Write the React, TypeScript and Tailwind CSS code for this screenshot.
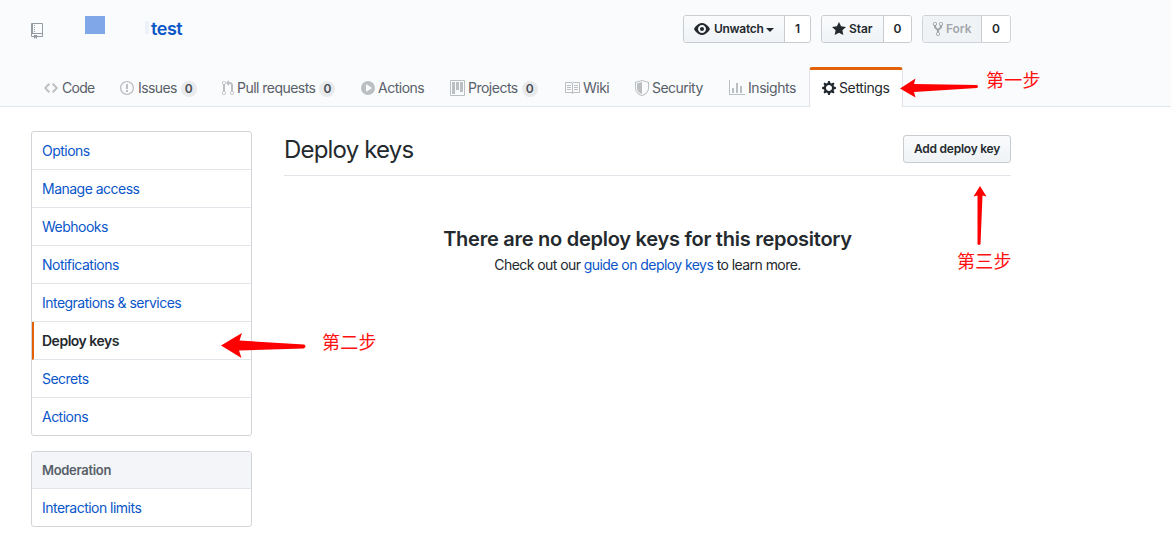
import type { ReactNode } from "react";

const paths = {
  repo: "M4 9H3V8h1v1zm0-3H3v1h1V6zm0-2H3v1h1V4zm0-2H3v1h1V2zm8-1v12c0 .55-.45 1-1 1H6v2l-1.5-1.5L3 16v-2H1c-.55 0-1-.45-1-1V1c0-.55.45-1 1-1h10c.55 0 1 .45 1 1zm-1 10H1v2h2v-1h3v1h5v-2zm0-10H2v9h9V1z",
  code: "M9.5 3L8 4.5 11.5 8 8 11.5 9.5 13 14 8 9.5 3zm-5 0L0 8l4.5 5L6 11.5 2.5 8 6 4.5 4.5 3z",
  issue: "M7 2.3c3.14 0 5.7 2.56 5.7 5.7s-2.56 5.7-5.7 5.7A5.71 5.71 0 011.3 8c0-3.14 2.56-5.7 5.7-5.7zM7 1C3.14 1 0 4.14 0 8s3.14 7 7 7 7-3.14 7-7-3.14-7-7-7zm1 3H6v5h2V4zm0 6H6v2h2v-2z",
  pull: "M11 11.28V5c-.03-.78-.34-1.47-.94-2.06C9.46 2.35 8.78 2.03 8 2H7V0L4 3l3 3V4h1c.27.02.48.11.69.31.21.2.3.42.31.69v6.28A1.993 1.993 0 0010 15a1.993 1.993 0 001-3.72zm-1 2.92c-.66 0-1.2-.55-1.2-1.2 0-.65.55-1.2 1.2-1.2.65 0 1.2.55 1.2 1.2 0 .65-.55 1.2-1.2 1.2zM4 3c0-1.11-.89-2-2-2a1.993 1.993 0 00-1 3.72v6.56A1.993 1.993 0 002 15a1.993 1.993 0 001-3.72V4.72c.59-.34 1-.98 1-1.72zm-.8 10c0 .66-.55 1.2-1.2 1.2-.65 0-1.2-.55-1.2-1.2 0-.65.55-1.2 1.2-1.2.65 0 1.2.55 1.2 1.2zM2 4.2C1.34 4.2.8 3.65.8 3c0-.65.55-1.2 1.2-1.2.65 0 1.2.55 1.2 1.2 0 .65-.55 1.2-1.2 1.2z",
  play: "M14 8A7 7 0 110 8a7 7 0 0114 0zm-8.223 3.482l4.599-3.066a.5.5 0 000-.832L5.777 4.518A.5.5 0 005 4.934v6.132a.5.5 0 00.777.416z",
  project: "M10 12h3V2h-3v10zm-4-2h3V2H6v8zm-4 4h3V2H2v12zm-1 1h13V1H1v14zM14 0H1a1 1 0 00-1 1v14a1 1 0 001 1h13a1 1 0 001-1V1a1 1 0 00-1-1z",
  book: "M3 5h4v1H3V5zm0 3h4V7H3v1zm0 2h4V9H3v1zm11-5h-4v1h4V5zm0 2h-4v1h4V7zm0 2h-4v1h4V9zm2-6v9c0 .55-.45 1-1 1H9.5l-1 1-1-1H2c-.55 0-1-.45-1-1V3c0-.55.45-1 1-1h5.5l1 1 1-1H15c.55 0 1 .45 1 1zm-8 .5L7.5 3H2v9h6V3.5zm7-.5H9.5l-.5.5V12h6V3z",
  shield: "M0 2l7-2 7 2v6.02C14 12.69 8.69 16 7 16c-1.69 0-7-3.31-7-7.98V2zm1 .75L7 1l6 1.75v5.268C13 12.104 8.449 15 7 15c-1.449 0-6-2.896-6-6.982V2.75zm1 .75L7 2v12c-1.207 0-5-2.482-5-5.985V3.5z",
  graph: "M16 14v1H0V0h1v14h15zM5 13H3V8h2v5zm4 0H7V3h2v10zm4 0h-2V6h2v7z",
  gear: "M14 8.77v-1.6l-1.94-.64-.45-1.09.88-1.84-1.13-1.13-1.81.91-1.09-.45-.69-1.92h-1.6l-.63 1.94-1.11.45-1.84-.88-1.13 1.13.91 1.81-.45 1.09L0 7.23v1.59l1.94.64.45 1.09-.88 1.84 1.13 1.13 1.81-.91 1.09.45.69 1.92h1.59l.63-1.94 1.11-.45 1.84.88 1.13-1.13-.92-1.81.47-1.09L14 8.75v.02zM7 11c-1.66 0-3-1.34-3-3s1.34-3 3-3 3 1.34 3 3-1.34 3-3 3z",
  eye: "M8.06 2C3 2 0 8 0 8s3 6 8.06 6C13 14 16 8 16 8s-3-6-7.94-6zM8 12c-2.2 0-4-1.78-4-4 0-2.2 1.8-4 4-4 2.22 0 4 1.8 4 4 0 2.22-1.78 4-4 4zm2-4c0 1.11-.89 2-2 2-1.11 0-2-.89-2-2 0-1.11.89-2 2-2 1.11 0 2 .89 2 2z",
  star: "M14 6l-4.9-.64L7 1 4.9 5.36 0 6l3.6 3.26L2.67 14 7 11.67 11.33 14l-.93-4.74L14 6z",
  fork: "M8 1a1.993 1.993 0 00-1 3.72V6L5 8 3 6V4.72A1.993 1.993 0 002 1a1.993 1.993 0 00-1 3.72V6.5l3 3v1.78A1.993 1.993 0 005 15a1.993 1.993 0 001-3.72V9.5l3-3V4.72A1.993 1.993 0 008 1zM2 4.2C1.34 4.2.8 3.65.8 3c0-.65.55-1.2 1.2-1.2.65 0 1.2.55 1.2 1.2 0 .65-.55 1.2-1.2 1.2zm3 10c-.66 0-1.2-.55-1.2-1.2 0-.65.55-1.2 1.2-1.2.65 0 1.2.55 1.2 1.2 0 .65-.55 1.2-1.2 1.2zm3-10c-.66 0-1.2-.55-1.2-1.2 0-.65.55-1.2 1.2-1.2.65 0 1.2.55 1.2 1.2 0 .65-.55 1.2-1.2 1.2z",
};

type IconName = keyof typeof paths;

function Icon({ name, w, className = "" }: { name: IconName; w: number; className?: string }) {
  return (
    <svg width={w} height={16} viewBox={`0 0 ${w} 16`} className={`shrink-0 ${className}`} fill="currentColor">
      <path fillRule="evenodd" d={paths[name]} />
    </svg>
  );
}

type Tab = { label: string; icon: IconName; w: number; width: string; gap: string; track: string; count?: number };

const tabs: Tab[] = [
  { label: "Code", icon: "code", w: 14, width: "w-[76px]", gap: "ml-1", track: "tracking-[-0.7px]" },
  { label: "Issues", icon: "issue", w: 14, width: "w-[102px]", gap: "ml-1", track: "tracking-[-0.6px]", count: 0 },
  { label: "Pull requests", icon: "pull", w: 12, width: "w-[139px]", gap: "ml-[3px]", track: "tracking-[-0.53px]", count: 0 },
  { label: "Actions", icon: "play", w: 14, width: "w-[89px]", gap: "ml-[3px]", track: "tracking-[-0.5px]" },
  { label: "Projects", icon: "project", w: 15, width: "w-[114px]", gap: "ml-[3px]", track: "tracking-[-0.5px]", count: 0 },
  { label: "Wiki", icon: "book", w: 16, width: "w-[71px]", gap: "ml-[3px]", track: "tracking-[-0.5px]" },
  { label: "Security", icon: "shield", w: 14, width: "w-[94px]", gap: "ml-[3px]", track: "tracking-[-0.53px]" },
  { label: "Insights", icon: "graph", w: 16, width: "w-[80px]", gap: "ml-[3px]", track: "tracking-[-0.45px]" },
];

function SocialButton({ children, count, width, countWidth, disabled = false }: { children: ReactNode; count: number; width: string; countWidth: string; disabled?: boolean }) {
  return (
    <div className={`flex h-7 overflow-hidden rounded-[3px] border text-xs font-semibold text-[#24292e] ${disabled ? "border-[#d0d3d7]" : "border-[#c8cbcf]"}`}>
      <div className={`flex items-center whitespace-nowrap border-r border-[#c8cbcf] pl-2.5 ${width} ${disabled ? "bg-[#eff3f6] text-[#24292e]/40" : "bg-linear-to-b from-[#fafbfc] to-[#eff3f6]"}`}>
        {children}
      </div>
      <div className={`flex items-center justify-center bg-white ${countWidth}`}>{count}</div>
    </div>
  );
}

const menu = ["Options", "Manage access", "Webhooks", "Notifications", "Integrations & services", "Deploy keys", "Secrets", "Actions"];

function Note({ place, children }: { place: string; children: ReactNode }) {
  return (
    <span className={`absolute whitespace-nowrap font-['Noto_Sans_CJK_SC',sans-serif] text-[18px] leading-6 tracking-[0.2px] text-[#ff1010] ${place}`}>
      {children}
    </span>
  );
}

export default function App() {
  return (
    <div className="relative h-[547px] w-[1171px] overflow-hidden bg-white font-['Inter',sans-serif] text-sm text-[#24292e]">
      <header className="flex h-[107px] flex-col border-b border-[#e1e4e8] bg-[#fafbfc] pl-[31px]">
        <div className="flex h-[67px] w-[980px] shrink-0 items-start justify-between">
          <div className="flex items-start">
            <Icon name="repo" w={12} className="mt-[23px] text-[#959ba2]" />
            <span className="ml-[42px] mt-4 h-[18px] w-5 bg-[#80a7e7]" />
            <span className="ml-[40px] mt-[21px] h-[13px] w-1 bg-[#edf2fa]" />
            <a className="ml-[2px] mt-[15px] text-[18px] font-semibold leading-7 tracking-[-0.45px] text-[#0d57c8]">test</a>
          </div>
          <div className="flex gap-[10px] pt-[15px]">
            <SocialButton count={1} width="w-[101px]" countWidth="w-[25px]">
              <Icon name="eye" w={16} />
              <span className="ml-1 tracking-[-0.3px]">Unwatch</span>
              <span className="ml-[3px] mt-px border-x-4 border-t-4 border-x-transparent border-t-[#24292e]" />
            </SocialButton>
            <SocialButton count={0} width="w-[62px]" countWidth="w-[27px]">
              <Icon name="star" w={14} />
              <span className="ml-[3px] tracking-[-0.1px]">Star</span>
            </SocialButton>
            <SocialButton count={0} width="w-[59px]" countWidth="w-[28px]" disabled>
              <Icon name="fork" w={10} />
              <span className="ml-[3px] tracking-[-0.1px]">Fork</span>
            </SocialButton>
          </div>
        </div>
        <nav className="flex h-[39px] shrink-0 pl-[13px]">
          {tabs.map((t) => (
            <a key={t.label} className={`flex h-[42px] shrink-0 items-center whitespace-nowrap text-[#586069] ${t.width}`}>
              <Icon name={t.icon} w={t.w} className="text-[#bcbfc2]" />
              <span className={`${t.gap} ${t.track}`}>{t.label}</span>
              {t.count !== undefined && (
                <span className="ml-1 mt-px flex h-4 w-4 items-center justify-center rounded-full bg-[#e9eaec] text-xs font-semibold text-[#444d56]">{t.count}</span>
              )}
            </a>
          ))}
          <a className="flex h-10 w-[94px] shrink-0 items-center whitespace-nowrap rounded-t-[3px] border-x border-t-[3px] border-x-[#e1e4e8] border-t-[#e36209] bg-white pb-0.5 pl-3">
            <Icon name="gear" w={14} />
            <span className="ml-[3px] tracking-[-0.38px]">Settings</span>
          </a>
        </nav>
      </header>

      <main className="flex items-start pl-[31px] pt-6">
        <aside className="w-[221px] shrink-0 tracking-[-0.52px] text-[#0a56c9]">
          <nav className="overflow-hidden rounded-[3px] border border-[#d1d5da]">
            {menu.map((m) => (
              <a
                key={m}
                className={`flex h-[38px] items-center border-b border-[#e1e4e8] last:h-[37px] last:border-b-0 ${m === "Deploy keys" ? "border-l-2 border-l-[#e36209] pl-2 font-semibold tracking-[-0.5px] text-[#24292e]" : "pl-2.5"}`}
              >
                {m}
              </a>
            ))}
          </nav>
          <nav className="mt-[15px] overflow-hidden rounded-[3px] border border-[#d1d5da]">
            <h3 className="flex h-[37px] items-center border-b border-[#e1e4e8] bg-[#f3f5f8] pl-2.5 text-[13px] font-semibold tracking-[-0.3px] text-[#586069]">Moderation</h3>
            <a className="flex h-[37px] items-center pl-2.5">Interaction limits</a>
          </nav>
        </aside>

        <section className="ml-8 w-[727px] shrink-0">
          <div className="flex h-[45px] items-start justify-between border-b border-[#e1e4e8]">
            <h2 className="pt-px text-2xl leading-9 tracking-[-0.82px]">Deploy keys</h2>
            <button className="mt-1 flex h-7 w-[108px] items-center justify-center whitespace-nowrap rounded-[3px] border border-[#c8cbcf] bg-linear-to-b from-[#fafbfc] to-[#eff3f6] text-xs font-semibold tracking-[-0.25px]">
              Add deploy key
            </button>
          </div>
          <div className="flex flex-col items-center pt-[48px]">
            <h3 className="whitespace-nowrap text-xl font-semibold leading-[30px] tracking-[-0.26px]">There are no deploy keys for this repository</h3>
            <p className="whitespace-nowrap leading-[21px] tracking-[-0.56px]">
              Check out our <a className="text-[#0a56c9]">guide on deploy keys</a> to learn more.
            </p>
          </div>
        </section>
      </main>

      <svg className="pointer-events-none absolute inset-0" width="1171" height="547" fill="#fe0000">
        <path d="M900 88.5L915.5 78.5L914 84L977 85Q979 86.5 977 88L914 92L915.5 97.5Z" />
        <path d="M221 345.5L242 333L239.5 340.5L304 344.5Q307 346 304 348.5L239 350.5L241.5 358Z" />
        <path d="M980 186L986.5 196.5L982.5 195.5L980.5 244Q979 246 977.5 244L977.5 195.5L973.5 196.5Z" />
      </svg>
      <Note place="left-[986px] top-[67px]">第一步</Note>
      <Note place="left-[322px] top-[329px]">第二步</Note>
      <Note place="left-[957px] top-[248px]">第三步</Note>
    </div>
  );
}
